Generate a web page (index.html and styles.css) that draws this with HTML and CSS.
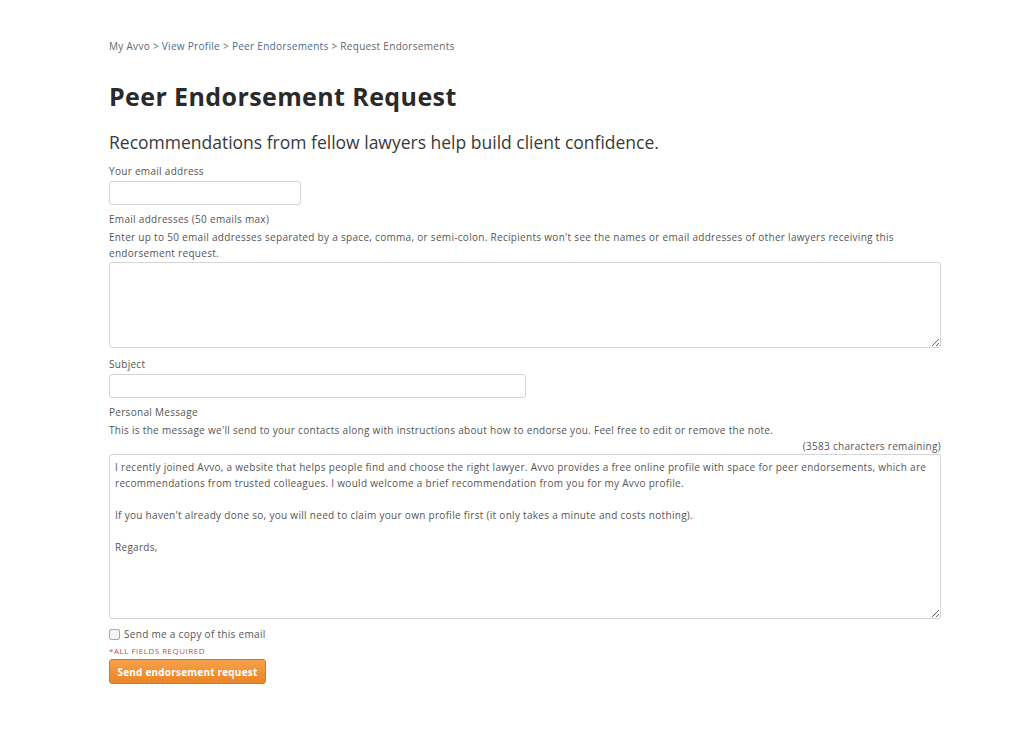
FILE: index.html
```html
<!DOCTYPE html>
<html>
<head>
<meta charset="utf-8">
<link rel="stylesheet" href="styles.css">
</head>
<body>
<div class="page">
  <nav class="crumbs">My Avvo &gt; <a href="#">View Profile</a> &gt; <a href="#">Peer Endorsements</a> &gt; Request Endorsements</nav>
  <h1 class="title">Peer Endorsement Request</h1>
  <p class="lead">Recommendations from fellow lawyers help build client confidence.</p>
  <form class="form">
    <label class="label">Your email address</label>
    <input class="input input-short" type="text">
    <label class="label label-gap">Email addresses (50 emails max)</label>
    <p class="help">Enter up to 50 email addresses separated by a space, comma, or semi-colon. Recipients won't see the names or email addresses of other lawyers receiving this endorsement request.</p>
    <textarea class="area area-emails"></textarea>
    <label class="label label-gap-area">Subject</label>
    <input class="input input-mid" type="text">
    <label class="label label-gap">Personal Message</label>
    <p class="help">This is the message we'll send to your contacts along with instructions about how to endorse you. Feel free to edit or remove the note.</p>
    <p class="remaining">(3583 characters remaining)</p>
    <textarea class="area area-msg">I recently joined Avvo, a website that helps people find and choose the right lawyer. Avvo provides a free online profile with space for peer endorsements, which are recommendations from trusted colleagues. I would welcome a brief recommendation from you for my Avvo profile.

If you haven't already done so, you will need to claim your own profile first (it only takes a minute and costs nothing).

Regards,</textarea>
    <label class="check"><span class="box"></span>Send me a copy of this email</label>
    <p class="required">*ALL FIELDS REQUIRED</p>
    <button class="btn" type="button">Send endorsement request</button>
  </form>
</div>
</body>
</html>
```
FILE: styles.css
```css
html, body {
  margin: 0;
  padding: 0;
  background: #fff;
}
body {
  font-family: "Open Sans", "Liberation Sans", sans-serif;
  color: #555;
}
.page {
  width: 832px;
  padding: 39px 0 0 109px;
}
.crumbs {
  font-size: 10px;
  line-height: 14px;
  letter-spacing: 0.3px;
  color: #666;
}
.crumbs a {
  color: #4a6c8f;
  text-decoration: none;
}
.title {
  margin: 28px 0 0;
  font-size: 25px;
  line-height: 30px;
  font-weight: 700;
  letter-spacing: 0.4px;
  color: #2a2a2a;
}
.lead {
  margin: 19px 0 0;
  font-size: 17.5px;
  line-height: 24px;
  color: #3a3a3a;
}
.form {
  display: flex;
  flex-direction: column;
  align-items: flex-start;
  margin-top: 10px;
}
.label {
  display: block;
  font-size: 10px;
  line-height: 14px;
  letter-spacing: 0.3px;
  color: #555;
}
.label-gap {
  margin-top: 7px;
}
.label-gap-area {
  margin-top: 9px;
}
.help {
  margin: 3px 0 0;
  font-size: 10px;
  line-height: 16px;
  letter-spacing: 0.3px;
  color: #555;
}
.input {
  box-sizing: border-box;
  height: 24px;
  border: 1px solid #d4d4d4;
  border-radius: 3px;
  margin-top: 3px;
  background: #fff;
}
.input-short { width: 192px; }
.input-mid { width: 417px; }
.area {
  box-sizing: border-box;
  width: 832px;
  border: 1px solid #d4d4d4;
  border-radius: 3px;
  background: #fff;
  resize: vertical;
  font-family: "Open Sans", "Liberation Sans", sans-serif;
  font-size: 10px;
  line-height: 16px;
  letter-spacing: 0.3px;
  color: #555;
  padding: 4px 5px;
  margin: 0;
}
.area-emails {
  height: 86px;
  margin-top: 1px;
}
.area-msg {
  height: 165px;
  margin-top: 1px;
}
.remaining {
  align-self: stretch;
  text-align: right;
  margin: 1px 0 0;
  font-size: 10px;
  line-height: 14px;
  letter-spacing: 0.3px;
  color: #555;
}
.check {
  display: flex;
  align-items: center;
  gap: 4px;
  margin-top: 8px;
  font-size: 10px;
  line-height: 14px;
  letter-spacing: 0.3px;
  color: #555;
}
.box {
  width: 9px;
  height: 9px;
  border: 1px solid #aaa;
  border-radius: 2px;
  background: #f4f4f4;
}
.required {
  margin: 5px 0 0;
  font-size: 8px;
  line-height: 10px;
  letter-spacing: 0.5px;
  color: #c0504d;
}
.btn {
  margin-top: 3px;
  width: 157px;
  height: 25px;
  border: 1px solid #d9781e;
  border-radius: 3px;
  background: linear-gradient(#f6a14a, #ea8428);
  color: #fff;
  font-family: "Open Sans", "Liberation Sans", sans-serif;
  font-size: 10px;
  font-weight: 700;
  letter-spacing: 0.2px;
  padding: 0;
}
```
